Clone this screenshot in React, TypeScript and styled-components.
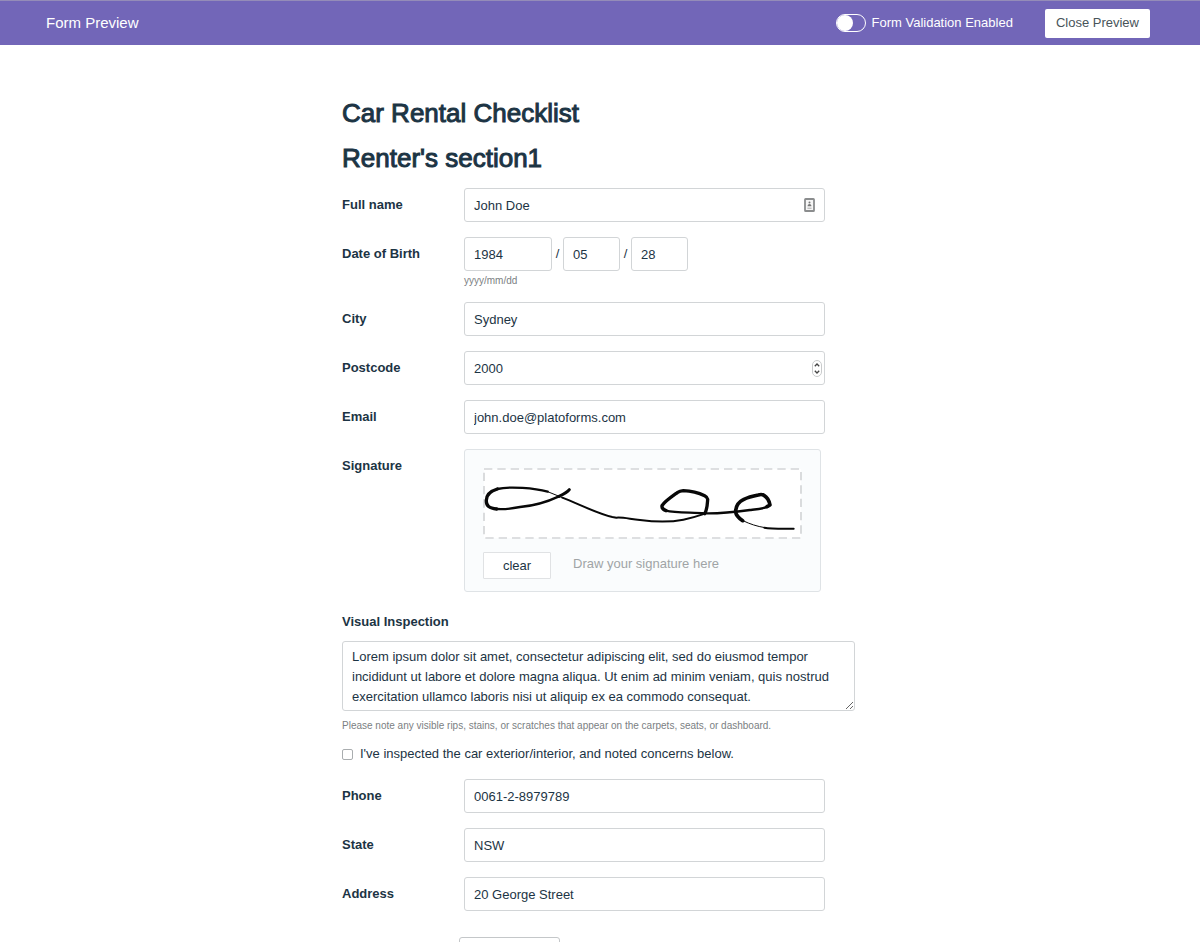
import React, { useState } from "react";
import styled, { createGlobalStyle } from "styled-components";

const ink = "#1c3444";
const line = "#d2d5d7";

const GlobalStyle = createGlobalStyle`
  *, *::before, *::after { box-sizing: border-box; }
  html { scrollbar-width: none; }
  body {
    margin: 0;
    background: #fff;
    color: ${ink};
    font: 13px/20px "Liberation Sans", Arial, sans-serif;
  }
  button, input, textarea { font: inherit; color: inherit; }
`;

const TopBar = styled.header`
  display: flex;
  align-items: center;
  height: 45px;
  padding: 0 50px 0 46px;
  background: #7266b8;
  border-top: 1px solid #948cb8;
  color: #fff;
`;

const BarTitle = styled.div`
  flex: 1;
  font-size: 15px;
`;

const ToggleLabel = styled.label`
  display: flex;
  align-items: center;
  gap: 6px;
  margin-right: 32px;
`;

const Toggle = styled.input`
  appearance: none;
  display: flex;
  width: 30px;
  height: 18px;
  margin: 0;
  border: 1px solid #fff;
  border-radius: 9px;

  &::before {
    content: "";
    width: 16px;
    height: 16px;
    border-radius: 8px;
    background: #fff;
  }
  &:checked {
    justify-content: flex-end;
  }
`;

const CloseButton = styled.button`
  height: 29px;
  padding: 0 11px;
  border: 0;
  border-radius: 2px;
  background: #fff;
  color: #48545a;
`;

const Form = styled.form`
  max-width: 516px;
  margin: 0 auto;
  padding: 53px 3px 24px 0;
  display: flex;
  flex-direction: column;
  gap: 15px;
`;

const Heading = styled.h1`
  margin: 0;
  font-size: 26px;
  line-height: 30px;
  font-weight: 400;
  -webkit-text-stroke: 1px ${ink};
`;

const Row = styled.div`
  display: grid;
  grid-template-columns: 122px minmax(0, 361px);
`;

const Label = styled.label`
  font-weight: 700;
  line-height: 34px;
`;

const Caption = styled.span`
  font-weight: 700;
  line-height: 34px;
`;

const Box = styled.input<{ $width?: string }>`
  width: ${(p) => p.$width ?? "100%"};
  height: 34px;
  padding: 0 9px;
  border: 1px solid ${line};
  border-radius: 3px;
  background: #fff;
  outline: none;
  appearance: textfield;

  &::-webkit-inner-spin-button {
    appearance: none;
  }
`;

const Adorned = styled.div`
  position: relative;
  height: 34px;
`;

const Adornment = styled.svg<{ $right: number }>`
  position: absolute;
  top: 8px;
  right: ${(p) => p.$right}px;
`;

const DateParts = styled.div`
  display: flex;
  align-items: center;
`;

const Slash = styled.span`
  width: 11px;
  text-align: center;
`;

const Hint = styled.p`
  margin: 0;
  font-size: 10px;
  line-height: 16px;
  color: #7b8082;
`;

const DateHint = styled(Hint)`
  padding-top: 4px;
  line-height: 12px;
`;

const SignaturePanel = styled.div`
  max-width: 357px;
  padding: 18px 18px 12px;
  border: 1px solid #dfe3e6;
  border-radius: 3px;
  background: #fafcfd;
`;

const Canvas = styled.svg`
  display: block;
  width: 100%;
  height: 71px;
`;

const PanelFooter = styled.div`
  display: flex;
  align-items: flex-start;
  gap: 22px;
  margin-top: 13px;
  line-height: 24px;
  color: #a0a4a6;
`;

const ClearButton = styled.button`
  width: 68px;
  height: 27px;
  padding: 0;
  border: 1px solid #e0e2e4;
  border-radius: 1px;
  background: #fff;
  color: ${ink};
`;

const Inspection = styled.div`
  display: flex;
  flex-direction: column;
`;

const InspectionLabel = styled.label`
  font-weight: 700;
  line-height: 30px;
  padding-bottom: 4px;
`;

const Notes = styled.textarea`
  display: block;
  width: 100%;
  height: 70px;
  margin-bottom: 7px;
  padding: 5px 9px 3px;
  border: 1px solid ${line};
  border-radius: 3px;
  outline: none;
  line-height: 20px;
  overflow: hidden;
  resize: vertical;
`;

const CheckLabel = styled.label`
  display: flex;
  align-items: center;
  gap: 7px;
  margin-top: 10px;
`;

const Check = styled.input`
  appearance: none;
  width: 11px;
  height: 11px;
  margin: 0;
  border: 1px solid #a9adaf;
  border-radius: 2px;
  background: #fff;

  &:checked {
    background: #7266b8;
  }
`;

const SubmitButton = styled.button`
  width: 101px;
  height: 34px;
  margin: 11px 0 0 117px;
  border: 1px solid #c4c7c9;
  border-radius: 3px;
  background: #fff;
`;

type FieldProps = { id: string; label: string; value: string; type?: string };

function Field({ id, label, value, type = "text", children }: React.PropsWithChildren<FieldProps>) {
  return (
    <Row>
      <Label htmlFor={id}>{label}</Label>
      <Adorned>
        <Box id={id} type={type} defaultValue={value} />
        {children}
      </Adorned>
    </Row>
  );
}

function ContactIcon() {
  return (
    <Adornment $right={10} width="11" height="18" viewBox="0 0 11 18" aria-hidden="true">
      <rect x="1" y="3" width="9" height="12" rx="0.6" fill="#f6f6f6" stroke="#8b8d8e" strokeWidth="1.8" />
      <circle cx="5.5" cy="6.6" r="1" fill="#777" />
      <path d="M3.6 10.2c0-3 3.8-3 3.8 0z" fill="#777" />
      <path d="M3.4 12.2h4.2" stroke="#aaa" />
    </Adornment>
  );
}

function StepperIcon() {
  return (
    <Adornment $right={3} width="10" height="18" viewBox="0 0 10 18" aria-hidden="true">
      <rect x="0.5" y="1.5" width="9" height="16" rx="4.5" fill="#fff" stroke="#c9cbcc" />
      <path d="M2.8 7.2 5 5l2.2 2.2M2.8 11.8 5 14l2.2-2.2" fill="none" stroke="#444" strokeWidth="1.3" />
    </Adornment>
  );
}

function Signature() {
  return (
    <g fill="none" stroke="#080808" strokeLinecap="round" strokeLinejoin="round">
      <path strokeWidth="7" d="M278 155C240 145 165 138 127 147" />
      <path strokeWidth="10" d="M127 147C104 154 94 168 94 181C93 199 103 204 125 207" />
      <path strokeWidth="7" d="M125 207C150 209 175 205 195 201C240 197 280 184 312 169" />
      <path strokeWidth="9" d="M312 169C325 163 337 157 343 149" />
      <path strokeWidth="3" d="M278 155L325 174" />
      <path strokeWidth="6" d="M322 173C375 194 430 222 472 231L484 233C500 231 520 236 555 240C600 246 650 246 685 239C710 234 733 227 750 221" />
      <path strokeWidth="10" d="M749 221C757 208 757 193 758 178C757 172 755 170 749 167C730 158 710 153 685 152C677 153 673 154 668 157C650 170 629 184 621 197C620 203 625 209 633 212" />
      <path strokeWidth="7" d="M633 212C660 219 705 217 750 220C790 221 840 216 885 210C905 208 923 207 938 200" />
      <path strokeWidth="11" d="M936 200L945 195C943 184 937 172 927 166C922 163 916 163 910 165C893 168 878 172 865 179C849 187 842 198 842 216C843 227 851 234 863 242" />
      <path strokeWidth="3" d="M866 243C885 252 905 259 930 263" />
      <path strokeWidth="6" d="M928 263C950 267 978 266 1016 266" />
    </g>
  );
}

export default function App() {
  const [signed, setSigned] = useState(true);
  return (
    <>
      <GlobalStyle />
      <TopBar>
        <BarTitle>Form Preview</BarTitle>
        <ToggleLabel>
          <Toggle type="checkbox" />
          Form Validation Enabled
        </ToggleLabel>
        <CloseButton type="button">Close Preview</CloseButton>
      </TopBar>
      <Form onSubmit={(e) => e.preventDefault()}>
        <Heading>Car Rental Checklist</Heading>
        <Heading as="h2">Renter's section1</Heading>
        <Field id="name" label="Full name" value="John Doe">
          <ContactIcon />
        </Field>
        <Row>
          <Label htmlFor="year">Date of Birth</Label>
          <div>
            <DateParts>
              <Box id="year" $width="88px" defaultValue="1984" />
              <Slash>/</Slash>
              <Box aria-label="Month" $width="57px" defaultValue="05" />
              <Slash>/</Slash>
              <Box aria-label="Day" $width="57px" defaultValue="28" />
            </DateParts>
            <DateHint>yyyy/mm/dd</DateHint>
          </div>
        </Row>
        <Field id="city" label="City" value="Sydney" />
        <Field id="postcode" label="Postcode" value="2000" type="number">
          <StepperIcon />
        </Field>
        <Field id="email" label="Email" value="john.doe@platoforms.com" type="email" />
        <Row>
          <Caption>Signature</Caption>
          <SignaturePanel>
            <Canvas viewBox="84 84 957 213" role="img" aria-label="Signature">
              <rect
                x="87"
                y="87"
                width="951"
                height="207"
                fill="#fff"
                stroke="#d3d5d7"
                strokeWidth="5"
                strokeDasharray="25 15"
              />
              {signed && <Signature />}
            </Canvas>
            <PanelFooter>
              <ClearButton type="button" onClick={() => setSigned(false)}>
                clear
              </ClearButton>
              <span>Draw your signature here</span>
            </PanelFooter>
          </SignaturePanel>
        </Row>
        <Inspection>
          <InspectionLabel htmlFor="notes">Visual Inspection</InspectionLabel>
          <Notes
            id="notes"
            defaultValue="Lorem ipsum dolor sit amet, consectetur adipiscing elit, sed do eiusmod tempor incididunt ut labore et dolore magna aliqua. Ut enim ad minim veniam, quis nostrud exercitation ullamco laboris nisi ut aliquip ex ea commodo consequat."
          />
          <Hint>
            Please note any visible rips, stains, or scratches that appear on the carpets, seats, or dashboard.
          </Hint>
          <CheckLabel>
            <Check type="checkbox" />
            I've inspected the car exterior/interior, and noted concerns below.
          </CheckLabel>
        </Inspection>
        <Field id="phone" label="Phone" value="0061-2-8979789" type="tel" />
        <Field id="state" label="State" value="NSW" />
        <Field id="address" label="Address" value="20 George Street" />
        <SubmitButton type="submit" aria-label="Submit" />
      </Form>
    </>
  );
}
